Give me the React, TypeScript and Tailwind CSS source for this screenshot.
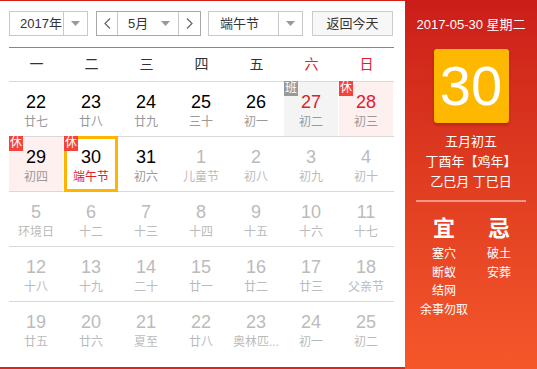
import React from "react";

type Cell = {
  d: number;
  l: string;
  other?: boolean;
  badge?: "休" | "班";
  bg?: "pink" | "gray";
  red?: boolean;
  lred?: boolean;
  sel?: boolean;
};

const rows: Cell[][] = [
  [
    { d: 22, l: "廿七" },
    { d: 23, l: "廿八" },
    { d: 24, l: "廿九" },
    { d: 25, l: "三十" },
    { d: 26, l: "初一" },
    { d: 27, l: "初二", badge: "班", bg: "gray", red: true },
    { d: 28, l: "初三", badge: "休", bg: "pink", red: true },
  ],
  [
    { d: 29, l: "初四", badge: "休", bg: "pink" },
    { d: 30, l: "端午节", badge: "休", sel: true, lred: true },
    { d: 31, l: "初六" },
    { d: 1, l: "儿童节", other: true },
    { d: 2, l: "初八", other: true },
    { d: 3, l: "初九", other: true },
    { d: 4, l: "初十", other: true },
  ],
  [
    { d: 5, l: "环境日", other: true },
    { d: 6, l: "十二", other: true },
    { d: 7, l: "十三", other: true },
    { d: 8, l: "十四", other: true },
    { d: 9, l: "十五", other: true },
    { d: 10, l: "十六", other: true },
    { d: 11, l: "十七", other: true },
  ],
  [
    { d: 12, l: "十八", other: true },
    { d: 13, l: "十九", other: true },
    { d: 14, l: "二十", other: true },
    { d: 15, l: "廿一", other: true },
    { d: 16, l: "廿二", other: true },
    { d: 17, l: "廿三", other: true },
    { d: 18, l: "父亲节", other: true },
  ],
  [
    { d: 19, l: "廿五", other: true },
    { d: 20, l: "廿六", other: true },
    { d: 21, l: "夏至", other: true },
    { d: 22, l: "廿八", other: true },
    { d: 23, l: "奥林匹...", other: true },
    { d: 24, l: "初一", other: true },
    { d: 25, l: "初二", other: true },
  ],
];

const Caret = () => (
  <svg width="9" height="5" viewBox="0 0 9 5">
    <path d="M0 0 L9 0 L4.5 5 Z" fill="#999" />
  </svg>
);

const Chevron = ({ dir }: { dir: "l" | "r" }) => (
  <svg width="7" height="11" viewBox="0 0 7 11">
    <path
      d={dir === "l" ? "M6 0.5 L1 5.5 L6 10.5" : "M1 0.5 L6 5.5 L1 10.5"}
      fill="none"
      stroke="#666"
      strokeWidth="1.2"
    />
  </svg>
);

function DayCell({ c }: { c: Cell }) {
  const bg =
    c.bg === "pink" ? "bg-[#fff0f0]" : c.bg === "gray" ? "bg-[#f4f4f4]" : "";
  const num = c.other
    ? "text-[#bbbbbb]"
    : c.red
    ? "text-[#e0202a]"
    : "text-[#000000]";
  const lun = c.other
    ? "text-[#bbbbbb]"
    : c.lred
    ? "text-[#e0202a]"
    : "text-[#999999]";
  return (
    <div className="relative w-[55px] h-[54px]">
      <div className={`h-full mr-px flex flex-col items-center pt-[10px] ${bg}`}>
        <div className={`text-[18px] leading-[20px] ${num}`}>{c.d}</div>
        <div className={`mt-[2px] text-[12px] leading-[16px] whitespace-nowrap ${lun}`}>
          {c.l}
        </div>
      </div>
      {c.sel && (
        <div className="absolute left-0 right-px top-[-1px] bottom-[-1px] border-[3px] border-[#ffb400]" />
      )}
      {c.badge && (
        <div
          className={`absolute left-0 top-[-1px] w-[14px] h-[15px] text-[12px] leading-[15px] text-center text-white ${
            c.badge === "休" ? "bg-[#f4433a]" : "bg-[#999999]"
          }`}
        >
          {c.badge}
        </div>
      )}
    </div>
  );
}

export default function App() {
  const weekdays = ["一", "二", "三", "四", "五", "六", "日"];
  return (
    <div
      className="w-[537px] h-[369px] flex overflow-hidden"
      style={{ fontFamily: '"Liberation Sans", "Noto Sans CJK SC", sans-serif' }}
    >
      <div className="w-[405px] h-[369px] bg-white border-t border-b-2 border-t-[#d0201a] border-b-[#d42a1e] pl-[9px] pt-[10px]">
        {/* controls */}
        <div className="flex h-[25px] text-[13px] text-[#333]">
          <div className="w-[79px] h-[25px] border border-[#c8c8c8] flex">
            <div className="flex-1 flex items-center pl-[10px]">2017年</div>
            <div className="w-[24px] border-l border-[#c8c8c8] flex items-center justify-center">
              <Caret />
            </div>
          </div>
          <div className="ml-[8px] w-[105px] h-[25px] border border-[#a8a8a8] flex">
            <div className="w-[21px] border-r border-[#c8c8c8] flex items-center justify-center">
              <Chevron dir="l" />
            </div>
            <div className="w-[60px] flex items-center pl-[10px] pr-[8px] justify-between">
              <span>5月</span>
              <Caret />
            </div>
            <div className="flex-1 border-l border-[#c8c8c8] flex items-center justify-center">
              <Chevron dir="r" />
            </div>
          </div>
          <div className="ml-[7px] w-[95px] h-[25px] border border-[#c8c8c8] flex">
            <div className="flex-1 flex items-center pl-[11px]">端午节</div>
            <div className="w-[24px] border-l border-[#c8c8c8] flex items-center justify-center">
              <Caret />
            </div>
          </div>
          <div className="ml-[9px] w-[81px] h-[25px] border border-[#cccccc] bg-[#f7f7f7] flex items-center justify-center">
            返回今天
          </div>
        </div>
        {/* grid */}
        <div className="mt-[11px] w-[385px] border-t border-[#e8604f]">
          <div className="flex h-[33px] items-center text-[14px]">
            {weekdays.map((w, i) => (
              <div
                key={w}
                className={`w-[55px] text-center ${i >= 5 ? "text-[#e0202a]" : "text-[#333]"}`}
              >
                {w}
              </div>
            ))}
          </div>
          {rows.map((r, ri) => (
            <div key={ri} className="flex border-t border-[#d9d9d9]">
              {r.map((c, ci) => (
                <DayCell key={ci} c={c} />
              ))}
            </div>
          ))}
        </div>
      </div>
      <div className="w-[132px] h-[369px] bg-linear-to-b from-[#cb1d19] to-[#f5572a] text-white flex flex-col items-center">
        <div className="mt-[16px] text-[13px] leading-[18px] whitespace-nowrap">2017-05-30 星期二</div>
        <div className="mt-[15px] w-[75px] h-[74px] rounded-[3px] bg-[#ffb800] shadow-[0_2px_3px_rgba(120,0,0,0.35)] flex items-center justify-center text-[56px] leading-none">
          30
        </div>
        <div className="mt-[9px] text-[13px] leading-[20px] text-center">
          <div>五月初五</div>
          <div>丁酉年【鸡年】</div>
          <div>乙巳月 丁巳日</div>
        </div>
        <div className="mt-[8px] w-[110px] h-[2px] bg-[rgba(255,255,255,0.45)]" />
        <div className="mt-[15px] w-[110px] flex">
          <div className="w-[56px] flex flex-col items-center">
            <div className="text-[22px] leading-[24px] font-bold">宜</div>
            <div className="mt-[4px] text-[12px] leading-[18.5px] text-center">
              <div>塞穴</div>
              <div>断蚁</div>
              <div>结网</div>
              <div className="whitespace-nowrap">余事勿取</div>
            </div>
          </div>
          <div className="w-[54px] flex flex-col items-center">
            <div className="text-[22px] leading-[24px] font-bold">忌</div>
            <div className="mt-[4px] text-[12px] leading-[18.5px] text-center">
              <div>破土</div>
              <div>安葬</div>
            </div>
          </div>
        </div>
      </div>
    </div>
  );
}
